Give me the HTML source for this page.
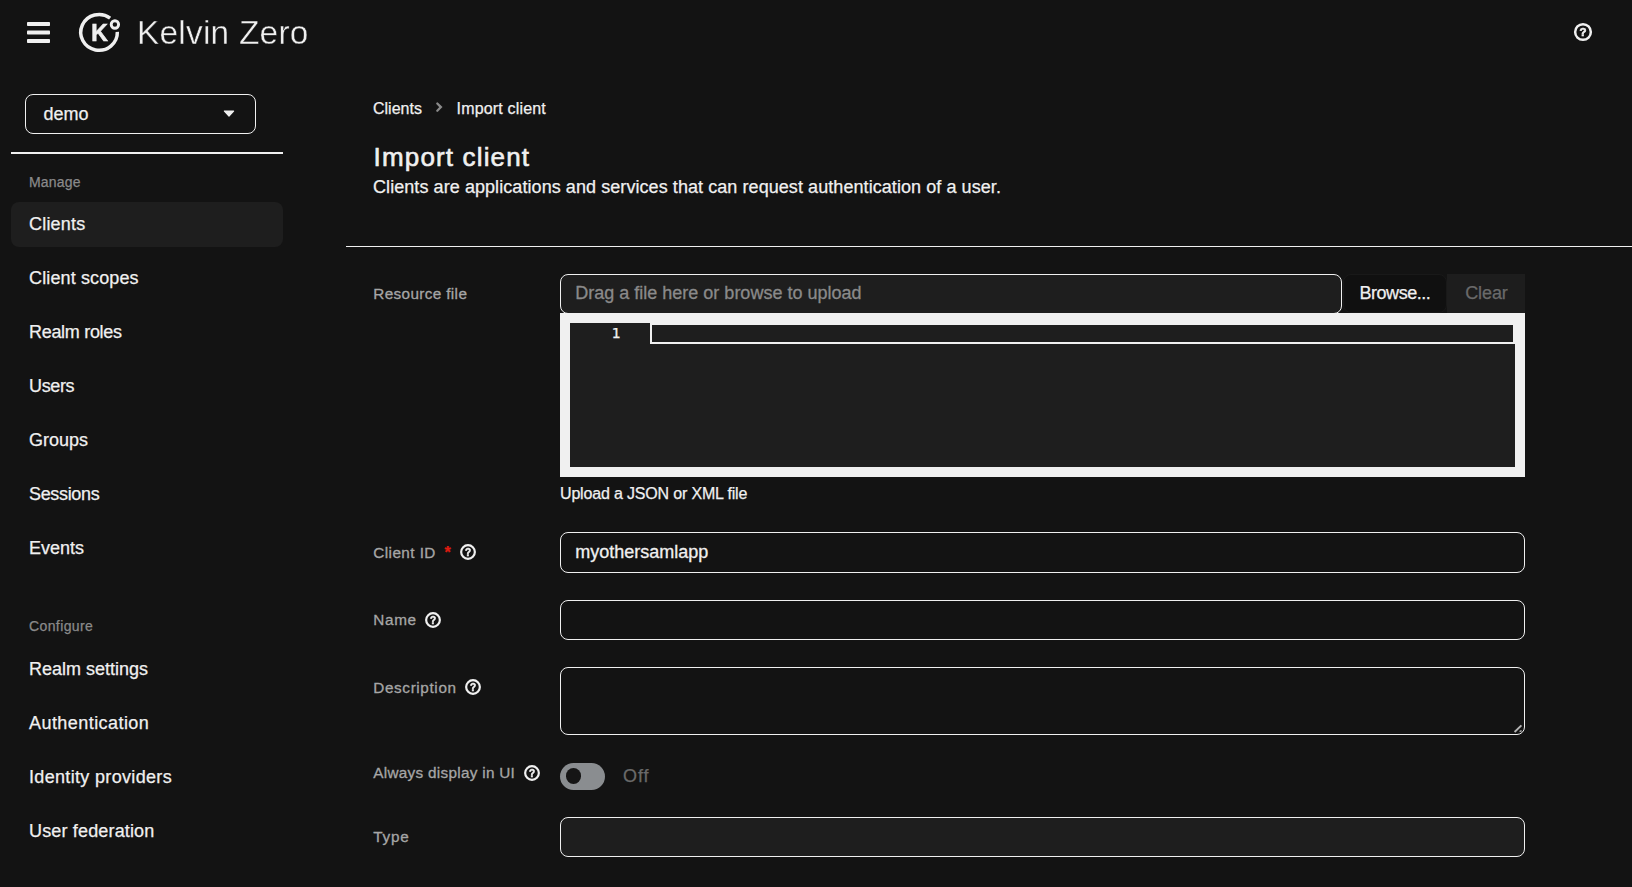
<!DOCTYPE html>
<html lang="en">
<head>
<meta charset="utf-8">
<title>Import client</title>
<style>
  html, body { margin: 0; padding: 0; }
  body {
    width: 1632px; height: 887px; overflow: hidden; position: relative;
    background: #131313; color: #f0f0f0;
    font-family: "Liberation Sans", Arial, sans-serif;
  }
  .abs { position: absolute; white-space: pre; line-height: 1; }
  svg { will-change: transform; }
  .t { position: absolute; white-space: pre; line-height: 20px; height: 20px; -webkit-text-stroke-width: 0.25px; }
  /* header */
  .brand { left: 136.6px; top: 15.2px; font-size: 33.4px; letter-spacing: 0.25px; line-height: 36px; height: 36px; color: #f0f0f0; -webkit-text-stroke: 0.4px #131313; will-change: transform; }
  /* sidebar */
  .realm { position: absolute; left: 25px; top: 94px; width: 229px; height: 38px; border: 1px solid #f0f0f0; border-radius: 8px; }
  .nav { font-size: 18px; left: 29px; color: #f0f0f0; }
  .navhead { font-size: 14px; left: 29px; color: #8a8a8a; }
  .active { position: absolute; left: 11px; top: 202px; width: 272px; height: 45px; background: #1e1e1e; border-radius: 8px; }
  .sdiv { position: absolute; left: 11px; top: 152px; width: 272px; height: 2px; background: #f0f0f0; }
  /* main */
  .bc { font-size: 16px; color: #f0f0f0; }
  .title { font-size: 26px; font-weight: 400; color: #f0f0f0; -webkit-text-stroke: 0.6px #f0f0f0; letter-spacing: 1.15px; line-height: 30px; height: 30px; }
  .desc { font-size: 18px; letter-spacing: 0.07px; }
  .mdiv { position: absolute; left: 346px; top: 246px; width: 1286px; height: 1px; background: #f0f0f0; }
  .lbl { font-size: 15.3px; font-weight: 400; color: #a6a6a6; -webkit-text-stroke: 0.3px #a6a6a6; left: 373.3px; }
  .inp { position: absolute; left: 560px; width: 963px; border: 1px solid #f0f0f0; border-radius: 8px; background: #131313; box-sizing: content-box; }
  .inptxt { font-size: 18px; color: #f0f0f0; -webkit-text-stroke-width: 0.3px; }
</style>
</head>
<body>

<!-- ===== header ===== -->
<svg class="abs" style="left:26px;top:20px" width="26" height="26" viewBox="0 0 26 26">
  <rect x="1" y="2" width="23" height="4" rx="0.8" fill="#f0f0f0"/>
  <rect x="1" y="10.5" width="23" height="4" rx="0.8" fill="#f0f0f0"/>
  <rect x="1" y="19" width="23" height="4" rx="0.8" fill="#f0f0f0"/>
</svg>

<svg class="abs" style="left:76px;top:10px;will-change:transform" width="48" height="44" viewBox="0 0 48 44">
  <!-- ring with gap upper right -->
  <path d="M 41.35 21.9 A 18.3 17.9 0 1 1 34.1 8.1" fill="none" stroke="#f0f0f0" stroke-width="3.5" stroke-linecap="butt"/>
  <circle cx="38.9" cy="14.5" r="3.7" fill="none" stroke="#f0f0f0" stroke-width="2.9"/>
  <text x="15.2" y="31.4" font-family="Liberation Sans, Arial, sans-serif" font-weight="700" font-size="23" fill="#f0f0f0" stroke="#f0f0f0" stroke-width="0.6">K</text>
</svg>

<div class="abs brand">Kelvin Zero</div>

<svg class="abs" style="left:1572px;top:21px" width="22" height="22" viewBox="0 0 22 22">
  <circle cx="11" cy="11" r="7.85" fill="none" stroke="#f0f0f0" stroke-width="2.5"/>
  <text x="11" y="15.2" text-anchor="middle" font-family="Liberation Sans, Arial, sans-serif" font-weight="700" font-size="11.5" fill="#f0f0f0" stroke="#f0f0f0" stroke-width="0.6">?</text>
</svg>

<!-- ===== sidebar ===== -->
<div class="realm"></div>
<div class="t" style="left:43.5px;top:103.5px;font-size:18px">demo</div>
<svg class="abs" style="left:222px;top:109px" width="14" height="9" viewBox="0 0 14 9">
  <path d="M2.4 2 H11.6 L7 7 Z" fill="#f0f0f0" stroke="#f0f0f0" stroke-width="1.2" stroke-linejoin="round"/>
</svg>
<div class="sdiv"></div>

<div class="t navhead" style="top:172px;letter-spacing:0.2px">Manage</div>
<div class="active"></div>
<div class="t nav" style="top:214px;letter-spacing:0.2px">Clients</div>
<div class="t nav" style="top:268px;letter-spacing:0.13px">Client scopes</div>
<div class="t nav" style="top:322px;letter-spacing:-0.3px">Realm roles</div>
<div class="t nav" style="top:376px;letter-spacing:-0.35px">Users</div>
<div class="t nav" style="top:430px">Groups</div>
<div class="t nav" style="top:484px;letter-spacing:-0.33px">Sessions</div>
<div class="t nav" style="top:538px">Events</div>
<div class="t navhead" style="top:616px;letter-spacing:0.39px">Configure</div>
<div class="t nav" style="top:659px">Realm settings</div>
<div class="t nav" style="top:713px;letter-spacing:0.44px">Authentication</div>
<div class="t nav" style="top:767px;letter-spacing:0.33px">Identity providers</div>
<div class="t nav" style="top:821px;letter-spacing:0.16px">User federation</div>

<!-- ===== main ===== -->
<div class="t bc" style="left:373px;top:99px">Clients</div>
<svg class="abs" style="left:433px;top:101px" width="12" height="13" viewBox="0 0 12 13">
  <path d="M4.3 2.5 L7.9 6.1 L4.3 9.7" fill="none" stroke="#8a8a8a" stroke-width="2.3" stroke-linecap="round" stroke-linejoin="miter"/>
</svg>
<div class="t bc" style="left:456.5px;top:99px;letter-spacing:0.18px">Import client</div>

<div class="abs title" style="left:373.6px;top:142px">Import client</div>
<div class="t desc" style="left:373px;top:177px">Clients are applications and services that can request authentication of a user.</div>
<div class="mdiv"></div>

<!-- resource file -->
<div class="t lbl" style="top:284.4px;letter-spacing:0.36px">Resource file</div>
<div class="inp" style="top:274px;left:560px;width:780px;height:38px;background:#1e1e1e"></div>
<div class="t inptxt" style="left:575.3px;top:283px;color:#8a8a8a">Drag a file here or browse to upload</div>
<div class="abs" style="left:1343px;top:274px;width:102px;height:37px;background:#101010;border:1px solid #191919;border-radius:8px"></div>
<div class="t" style="left:1359.5px;top:283px;font-size:18px;letter-spacing:-0.47px;color:#f0f0f0">Browse...</div>
<div class="abs" style="left:1447px;top:274px;width:78px;height:39px;background:#1d1d1d"></div>
<div class="t" style="left:1465.2px;top:283px;font-size:18px;letter-spacing:-0.1px;color:#6a6a6a">Clear</div>

<!-- editor -->
<div class="abs" style="left:560px;top:313px;width:965px;height:164px;background:#f0f0f0"></div>
<div class="abs" style="left:570px;top:323px;width:945px;height:144px;background:#1e1e1e"></div>
<div class="abs" style="left:650px;top:323px;width:861px;height:17px;border:2px solid #f0f0f0;box-sizing:content-box"></div>
<div class="t" style="left:611.4px;top:323px;font-size:14.8px;font-family:'DejaVu Sans Mono','Liberation Mono',monospace;color:#f0f0f0">1</div>
<div class="t" style="left:560px;top:483.8px;font-size:16px;letter-spacing:-0.17px;color:#f0f0f0">Upload a JSON or XML file</div>

<!-- client id -->
<div class="t lbl" style="top:542.6px;letter-spacing:0.43px">Client ID</div>
<div class="t" style="left:444.6px;top:543px;font-size:16px;font-weight:700;color:#e01b10">*</div>
<svg class="abs" style="left:459px;top:543px" width="18" height="18" viewBox="0 0 18 18">
  <circle cx="9" cy="9" r="6.85" fill="none" stroke="#f0f0f0" stroke-width="2.2"/>
  <text x="9" y="12.6" text-anchor="middle" font-family="Liberation Sans, Arial, sans-serif" font-weight="700" font-size="10" fill="#f0f0f0" stroke="#f0f0f0" stroke-width="0.5">?</text>
</svg>
<div class="inp" style="top:532px;height:39px"></div>
<div class="t inptxt" style="left:575.2px;top:542px">myothersamlapp</div>

<!-- name -->
<div class="t lbl" style="top:609.9px;letter-spacing:0.64px">Name</div>
<svg class="abs" style="left:424px;top:611px" width="18" height="18" viewBox="0 0 18 18">
  <circle cx="9" cy="9" r="6.85" fill="none" stroke="#f0f0f0" stroke-width="2.2"/>
  <text x="9" y="12.6" text-anchor="middle" font-family="Liberation Sans, Arial, sans-serif" font-weight="700" font-size="10" fill="#f0f0f0" stroke="#f0f0f0" stroke-width="0.5">?</text>
</svg>
<div class="inp" style="top:600px;height:38px"></div>

<!-- description -->
<div class="t lbl" style="top:677.9px;letter-spacing:0.62px">Description</div>
<svg class="abs" style="left:464px;top:678px" width="18" height="18" viewBox="0 0 18 18">
  <circle cx="9" cy="9" r="6.85" fill="none" stroke="#f0f0f0" stroke-width="2.2"/>
  <text x="9" y="12.6" text-anchor="middle" font-family="Liberation Sans, Arial, sans-serif" font-weight="700" font-size="10" fill="#f0f0f0" stroke="#f0f0f0" stroke-width="0.5">?</text>
</svg>
<div class="inp" style="top:667px;height:66px"></div>
<svg class="abs" style="left:1512px;top:722px" width="12" height="12" viewBox="0 0 12 12">
  <path d="M2.6 10 L9.4 3.4" fill="none" stroke="#b4b4b4" stroke-width="1.9"/><path d="M7.6 9.6 L9.6 8.6" fill="none" stroke="#b4b4b4" stroke-width="1.5"/>
</svg>

<!-- always display -->
<div class="t lbl" style="top:762.9px;letter-spacing:0.29px">Always display in UI</div>
<svg class="abs" style="left:523px;top:764px" width="18" height="18" viewBox="0 0 18 18">
  <circle cx="9" cy="9" r="6.85" fill="none" stroke="#f0f0f0" stroke-width="2.2"/>
  <text x="9" y="12.6" text-anchor="middle" font-family="Liberation Sans, Arial, sans-serif" font-weight="700" font-size="10" fill="#f0f0f0" stroke="#f0f0f0" stroke-width="0.5">?</text>
</svg>
<div class="abs" style="left:560px;top:763px;width:45px;height:27px;border-radius:14px;background:#8a8d90"></div>
<div class="abs" style="left:565.5px;top:768px;width:15.5px;height:15.5px;border-radius:50%;background:#151515"></div>
<div class="t" style="left:623px;top:766px;font-size:18px;letter-spacing:0.9px;color:#6a6a6a">Off</div>

<!-- type -->
<div class="t lbl" style="top:827.4px;letter-spacing:0.75px">Type</div>
<div class="inp" style="top:817px;height:38px;background:#1e1e1e"></div>

</body>
</html>
